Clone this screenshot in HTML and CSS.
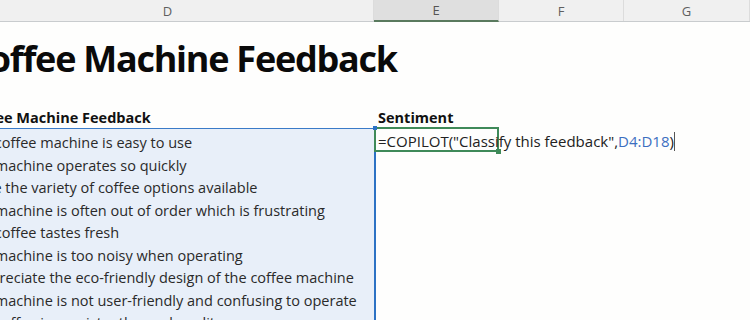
FILE: index.html
```html
<!DOCTYPE html>
<html>
<head>
<meta charset="utf-8">
<link rel="stylesheet" href="styles.css">
</head>
<body>
<div class="sheet">
  <div class="colheads">
    <div class="ch">D</div>
    <div class="ch sel">E</div>
    <div class="ch">F</div>
    <div class="ch">G</div>
  </div>
  <div class="title-row">
    <div class="title">Coffee Machine Feedback</div>
  </div>
  <div class="thead">
    <div class="th">Coffee Machine Feedback</div>
    <div class="th">Sentiment</div>
  </div>
  <div class="body">
    <div class="range">
      <div class="cell">The coffee machine is easy to use</div>
      <div class="cell">The machine operates so quickly</div>
      <div class="cell">I love the variety of coffee options available</div>
      <div class="cell">The machine is often out of order which is frustrating</div>
      <div class="cell">The coffee tastes fresh</div>
      <div class="cell">The machine is too noisy when operating</div>
      <div class="cell">I appreciate the eco-friendly design of the coffee machine</div>
      <div class="cell">The machine is not user-friendly and confusing to operate</div>
      <div class="cell">The coffee is consistently good quality</div>
    </div>
    <div class="ecol">
      <div class="active">
        <span class="formula">=COPILOT("Classify this feedback",<span class="ref">D4:D18</span>)<span class="caret"></span></span>
        <span class="handle br"></span>
      </div>
    </div>
    <span class="handle tr"></span>
  </div>
</div>
</body>
</html>
```
FILE: styles.css
```css
html, body {
  margin: 0;
  padding: 0;
  background: #fefefd;
  overflow: hidden;
}
body {
  width: 750px;
  height: 320px;
  font-family: "Open Sans", "Noto Sans", sans-serif;
  color: #262626;
}
.sheet {
  margin-left: -38px;
  width: 788px;
  height: 320px;
  overflow: hidden;
}
.colheads {
  display: grid;
  grid-template-columns: 412px 125px 125px 126px;
  height: 22px;
  background: #f0f0f0;
  border-bottom: 1px solid #c9ccce;
  box-sizing: border-box;
}
.ch {
  display: flex;
  align-items: center;
  justify-content: center;
  font-size: 13px;
  color: #5f5f5f;
  border-right: 1px solid #dcdcdc;
  font-family: "Open Sans", sans-serif;
}
.ch.sel {
  background: #dfdfdf;
  border-bottom: 2px solid #5a7a5e;
  margin-bottom: -1px;
  color: #555;
}
.title-row {
  height: 84px;
  box-sizing: border-box;
  padding-top: 12px;
}
.title {
  font-size: 36px;
  font-weight: 700;
  color: #0a0a0a;
  padding-left: 5px;
  white-space: nowrap;
  letter-spacing: -1.25px;
}
.thead {
  display: grid;
  grid-template-columns: 412px 125px;
  height: 22px;
  align-items: end;
}
.th {
  font-size: 14.5px;
  font-weight: 700;
  color: #111;
  padding-left: 4px;
  white-space: nowrap;
  line-height: 20px;
}
.body {
  position: relative;
  display: grid;
  grid-template-columns: 412px 125px;
}
.range {
  background: #e8eff9;
  border-top: 1px solid #3a7bc8;
  border-right: 2px solid #2c72c4;
  margin-right: -2px;
  height: 192px;
  overflow: hidden;
}
.cell {
  height: 22.5px;
  line-height: 28px;
  font-size: 14.5px;
  padding-left: 4px;
  white-space: nowrap;
  color: #2a2a2a;
}
.handle {
  position: absolute;
}
.handle.tr {
  left: 411px;
  top: -2px;
  width: 4px;
  height: 4px;
  background: #2c72c4;
}
.ecol {
  position: relative;
}
.active {
  position: relative;
  height: 25px;
  box-sizing: border-box;
  border: 2px solid #3f8a59;
  margin-top: -1px;
}
.formula {
  position: absolute;
  left: 2px;
  top: 1px;
  font-size: 15px;
  line-height: 22px;
  white-space: nowrap;
  color: #222;
}
.ref {
  color: #3d6fc0;
}
.caret {
  display: inline-block;
  width: 1px;
  height: 19px;
  background: #555;
  vertical-align: -4px;
  margin-left: 0;
}
.handle.br {
  right: -4px;
  bottom: -4px;
  width: 5px;
  height: 5px;
  background: #3f8a59;
}
```
